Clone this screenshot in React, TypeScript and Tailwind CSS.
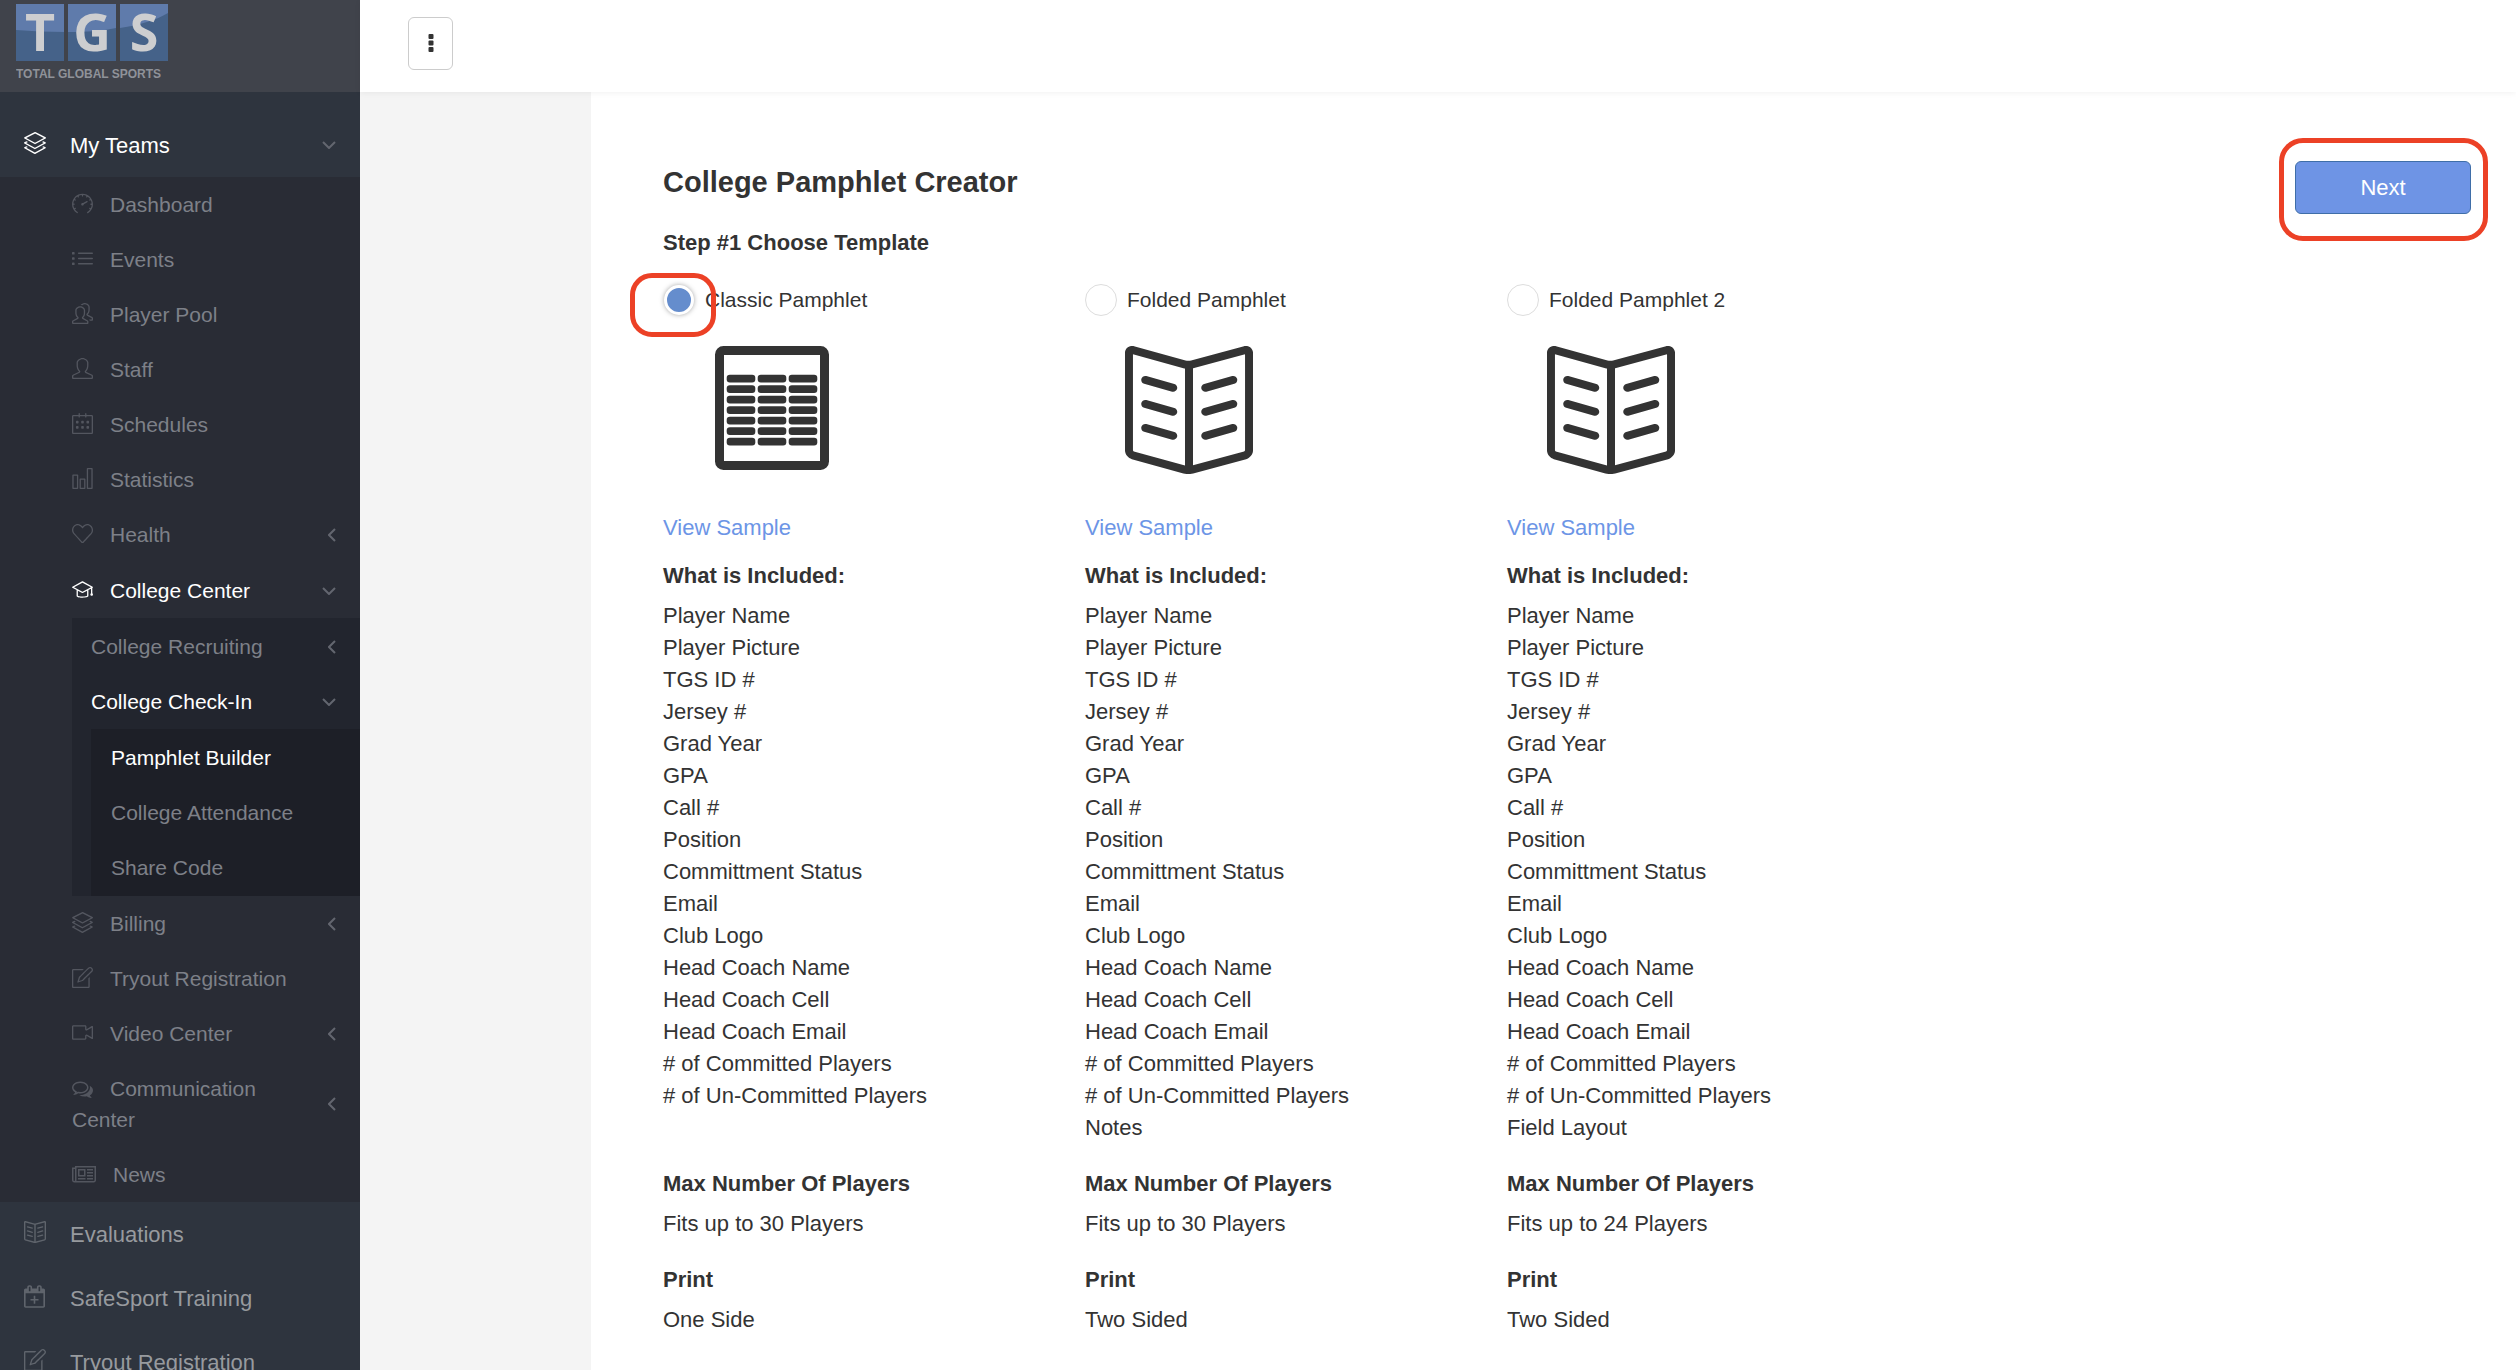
import { useState } from "react";
import type { ComponentType, ReactNode } from "react";
import {
  SlLayers,
  SlSpeedometer,
  SlList,
  SlPeople,
  SlUser,
  SlCalender,
  SlChart,
  SlHeart,
  SlGraduation,
  SlNote,
  SlCamrecorder,
  SlBookOpen,
} from "react-icons/sl";

type IconProps = { className?: string };
type Icon = ComponentType<IconProps>;

function CommentsIcon({ className }: IconProps) {
  return (
    <svg className={className} viewBox="0 128 1792 1536" width="21" height="18" fill="currentColor" aria-hidden="true">
      <path d="M704 384q-153 0-286 52t-211.5 141-78.5 191q0 82 53 158t149 132l97 56-35 84q34-20 62-39l44-31 53 10q78 14 153 14 153 0 286-52t211.5-141 78.5-191-78.5-191-211.5-141-286-52zm0-128q191 0 353.5 68.5t256.5 186.5 94 257-94 257-256.5 186.5-353.5 68.5q-86 0-176-16-124 88-278 128-36 9-86 16h-3q-11 0-20.5-8t-11.5-21q-1-3-1-6.5t.5-6.5 2-6l2.5-5 3.5-5.5 4-5 4.5-5 4-4.5q5-6 23-25t26-29.5 22.5-29 25-38.5 20.5-44q-124-72-195-177t-71-224q0-139 94-257t256.5-186.5 353.5-68.5zm822 1169q10 24 20.5 44t25 38.5 22.5 29 26 29.5 23 25q1 1 4 4.5t4.5 5 4 5 3.5 5.5l2.5 5 2 6 .5 6.5-1 6.5q-3 14-13 22t-22 7q-50-7-86-16-154-40-278-128-90 16-176 16-271 0-472-132 58 4 88 4 161 0 309-45t264-129q125-92 192-212t67-254q0-77-23-152 129 71 204 178t75 230q0 120-71 224.5t-195 176.5z" />
    </svg>
  );
}

function NewspaperIcon({ className }: IconProps) {
  return (
    <svg className={className} viewBox="0 128 2048 1536" width="24" height="18" fill="currentColor" aria-hidden="true">
      <path d="M1024 512h-384v384h384v-384zm128 640v128h-640v-128h640zm0-768v640h-640v-640h640zm640 768v128h-512v-128h512zm0-256v128h-512v-128h512zm0-256v128h-512v-128h512zm0-256v128h-512v-128h512zm-1536 960v-960h-128v960q0 26 19 45t45 19 45-19 19-45zm1664 0v-1088h-1536v1088q0 33-11 64h1483q26 0 45-19t19-45zm128-1216v1216q0 80-56 136t-136 56h-1664q-80 0-136-56t-56-136v-1088h256v-128h1792z" />
    </svg>
  );
}

function CalendarPlusIcon({ className }: IconProps) {
  return (
    <svg className={className} viewBox="128 0 1664 1792" width="21" height="23" fill="currentColor" aria-hidden="true">
      <path d="M1664 256q52 0 90 38t38 90v1280q0 52-38 90t-90 38h-1408q-52 0-90-38t-38-90v-1280q0-52 38-90t90-38h128v-96q0-66 47-113t113-47h64q66 0 113 47t47 113v96h384v-96q0-66 47-113t113-47h64q66 0 113 47t47 113v96h128zm-384-96v288q0 14 9 23t23 9h64q14 0 23-9t9-23v-288q0-14-9-23t-23-9h-64q-14 0-23 9t-9 23zm-768 0v288q0 14 9 23t23 9h64q14 0 23-9t9-23v-288q0-14-9-23t-23-9h-64q-14 0-23 9t-9 23zm1152 1504v-1024h-1408v1024h1408zm-640-576h224q14 0 23 9t9 23v64q0 14-9 23t-23 9h-224v224q0 14-9 23t-23 9h-64q-14 0-23-9t-9-23v-224h-224q-14 0-23-9t-9-23v-64q0-14 9-23t23-9h224v-224q0-14 9-23t23-9h64q14 0 23 9t9 23z" />
    </svg>
  );
}

function Chevron({ open }: { open: boolean }) {
  return (
    <span className="flex w-3 shrink-0 justify-end text-[#63666f]">
      {open ? (
        <svg viewBox="0 0 14 8" width="14" height="8" className="shrink-0" fill="none" stroke="currentColor" strokeWidth="2" aria-hidden="true">
          <path d="M1 1l6 6 6-6" />
        </svg>
      ) : (
        <svg viewBox="0 0 8 14" width="8" height="14" fill="none" stroke="currentColor" strokeWidth="2" aria-hidden="true">
          <path d="M7 1L1 7l6 6" />
        </svg>
      )}
    </span>
  );
}

type RowProps = {
  label: ReactNode;
  icon?: Icon;
  active?: boolean;
  chevron?: "open" | "closed";
  className?: string;
};

function SubRow({ label, icon: IconCmp, active, chevron, className = "pl-[72px]" }: RowProps) {
  const text = active ? "text-white" : "text-[#7d8088]";
  const glyph = active ? "text-white" : "text-[#53565f]";
  return (
    <a href="#" className={`flex items-center justify-between py-3 pr-6 text-[21px] leading-[31px] ${text} ${className}`}>
      <span className="min-w-0">
        {IconCmp && (
          <span className={`mr-[17px] inline-flex h-[21px] align-[-2px] ${glyph}`}>
            <IconCmp className="self-center" />
          </span>
        )}
        {label}
      </span>
      {chevron && <Chevron open={chevron === "open"} />}
    </a>
  );
}

function TopRow({ label, icon: IconCmp, active, chevron }: RowProps & { icon: Icon }) {
  return (
    <a href="#" className={`flex h-16 items-center pr-6 pl-6 text-[22px] ${active ? "text-white" : "text-[#979a9e]"}`}>
      <span className={`flex w-[46px] shrink-0 pb-1 ${active ? "text-white" : "text-[#5f646c]"}`}>
        <IconCmp />
      </span>
      <span className="flex-1 whitespace-nowrap">{label}</span>
      {chevron && <Chevron open={chevron === "open"} />}
    </a>
  );
}

function Logo() {
  return (
    <svg viewBox="0 0 156 90" width="156" height="90" role="img" aria-label="TGS Total Global Sports">
      {["T", "G", "S"].map((letter, i) => (
        <g key={letter}>
          <rect x={i * 52} y="4" width="48" height="57" fill="#5f7bab" />
          <path
            fill="#456289"
            d={["M0 30C16 31 32 32 48 32V61H0Z", "M52 32C70 32 86 31 100 28V61H52Z", "M104 28C124 25 140 20 152 13V61H104Z"][i]}
          />
          <text x={i * 52 + 24} y="51" textAnchor="middle" fontFamily="Open Sans, sans-serif" fontWeight="700" fontSize="52" fill="#cdced0">
            {letter}
          </text>
        </g>
      ))}
      <text x="0" y="78" fontFamily="Liberation Sans, sans-serif" fontWeight="700" fontSize="12" fill="#8f9299">
        TOTAL GLOBAL SPORTS
      </text>
    </svg>
  );
}

function Sidebar() {
  return (
    <aside className="w-[360px] shrink-0 bg-[#2e343e]">
      <a href="#" className="flex h-[92px] bg-[#40434b] pl-4">
        <Logo />
      </a>
      <nav>
        <div className="pt-[21px]">
          <TopRow label="My Teams" icon={SlLayers} active chevron="open" />
        </div>
        <div className="bg-[#292c35]">
          <SubRow label="Dashboard" icon={SlSpeedometer} />
          <SubRow label="Events" icon={SlList} />
          <SubRow label="Player Pool" icon={SlPeople} />
          <SubRow label="Staff" icon={SlUser} />
          <SubRow label="Schedules" icon={SlCalender} />
          <SubRow label="Statistics" icon={SlChart} />
          <SubRow label="Health" icon={SlHeart} chevron="closed" />
          <div className="pt-px">
            <SubRow label="College Center" icon={SlGraduation} active chevron="open" />
          </div>
          <div className="ml-[72px] bg-[#22252e] pt-px">
            <SubRow label="College Recruiting" chevron="closed" className="pl-[19px]" />
            <SubRow label="College Check-In" active chevron="open" className="pl-[19px]" />
            <div className="ml-[19px] bg-[#1d1f27] py-px">
              <SubRow label="Pamphlet Builder" active className="pl-5" />
              <SubRow label="College Attendance" className="pl-5" />
              <SubRow label="Share Code" className="pl-5" />
            </div>
          </div>
          <SubRow label="Billing" icon={SlLayers} chevron="closed" />
          <SubRow label="Tryout Registration" icon={SlNote} />
          <SubRow label="Video Center" icon={SlCamrecorder} chevron="closed" />
          <SubRow label="Communication Center" icon={CommentsIcon} chevron="closed" />
          <SubRow label="News" icon={NewspaperIcon} />
        </div>
        <TopRow label="Evaluations" icon={SlBookOpen} />
        <TopRow label="SafeSport Training" icon={CalendarPlusIcon} />
        <TopRow label="Tryout Registration" icon={SlNote} />
      </nav>
    </aside>
  );
}

function ClassicArt() {
  return (
    <svg viewBox="0 0 114 124" width="114" height="124" fill="#333" aria-hidden="true">
      <rect x="4.5" y="4.5" width="105" height="115" rx="4" fill="none" stroke="#333" strokeWidth="9" />
      {[0, 1, 2, 3, 4, 5, 6].map((row) =>
        [0, 1, 2].map((col) => (
          <rect key={`${row}-${col}`} x={11.7 + col * 31} y={28.8 + row * 10.5} width="28.6" height="7.6" rx="3.2" />
        )),
      )}
    </svg>
  );
}

const fields = [
  "Player Name",
  "Player Picture",
  "TGS ID #",
  "Jersey #",
  "Grad Year",
  "GPA",
  "Call #",
  "Position",
  "Committment Status",
  "Email",
  "Club Logo",
  "Head Coach Name",
  "Head Coach Cell",
  "Head Coach Email",
  "# of Committed Players",
  "# of Un-Committed Players",
];

const templates = [
  { id: "classic", name: "Classic Pamphlet", extra: "", max: "Fits up to 30 Players", print: "One Side" },
  { id: "folded", name: "Folded Pamphlet", extra: "Notes", max: "Fits up to 30 Players", print: "Two Sided" },
  { id: "folded2", name: "Folded Pamphlet 2", extra: "Field Layout", max: "Fits up to 24 Players", print: "Two Sided" },
];

export default function App() {
  const [selected, setSelected] = useState("classic");
  return (
    <div className="flex h-screen overflow-hidden bg-white font-['Liberation_Sans',Arial,sans-serif] text-[#333]">
      <Sidebar />
      <div className="flex min-w-0 flex-1 flex-col">
        <header className="z-10 flex h-[92px] shrink-0 items-start bg-white pt-[17px] pl-12 shadow-[0_1px_6px_rgba(0,0,0,0.06)]">
          <button type="button" aria-label="More options" className="flex h-[53px] w-[45px] items-center justify-center rounded-md border border-[#ccc] bg-white pb-0.5">
            <svg viewBox="0 0 6 18" width="6" height="18" fill="#333" aria-hidden="true">
              <rect x="0.5" y="0" width="5" height="5" rx="1" />
              <rect x="0.5" y="6.5" width="5" height="5" rx="1" />
              <rect x="0.5" y="13" width="5" height="5" rx="1" />
            </svg>
          </button>
        </header>
        <div className="flex min-h-0 flex-1 bg-[#f4f4f4] pl-[231px]">
          <main className="flex flex-1 items-start justify-between bg-white pl-[72px]">
            <div className="pt-[70px]">
              <h1 className="text-[29px] leading-10 font-bold">College Pamphlet Creator</h1>
              <h2 className="mt-[25px] text-[22px] leading-8 font-bold">Step #1 Choose Template</h2>
              <div className="mt-[25px] flex text-[22px] leading-8">
                {templates.map((t) => (
                  <section key={t.id} className="w-[422px]">
                    <label className="flex h-8 items-center gap-[10px] text-[21px]">
                      <span className="relative flex">
                        <input
                          type="radio"
                          name="template"
                          value={t.id}
                          checked={selected === t.id}
                          onChange={() => setSelected(t.id)}
                          className="size-8 appearance-none rounded-full border border-[#ddd] bg-white checked:m-px checked:size-[30px] checked:border-3 checked:border-white checked:bg-[#658dcd] checked:shadow-[0_0_5px_rgba(0,0,0,0.35)]"
                        />
                        {t.id === "classic" && (
                          <span className="pointer-events-none absolute -top-[11px] -left-[33px] h-16 w-[86px] rounded-[22px] border-5 border-[#ec4126]" />
                        )}
                      </span>
                      {t.name}
                    </label>
                    <div className="flex h-[176px] pt-[30px] pl-10">
                      {t.id === "classic" ? (
                        <div className="pl-3">
                          <ClassicArt />
                        </div>
                      ) : (
                        <SlBookOpen className="size-32" />
                      )}
                    </div>
                    <a href="#" className="mt-5 block text-[#6c95e6]">
                      View Sample
                    </a>
                    <h3 className="mt-4 font-bold">What is Included:</h3>
                    <ul className="mt-2 min-h-[544px]">
                      {fields.map((f) => (
                        <li key={f}>{f}</li>
                      ))}
                      {t.extra && <li>{t.extra}</li>}
                    </ul>
                    <h3 className="mt-6 font-bold">Max Number Of Players</h3>
                    <p className="mt-2">{t.max}</p>
                    <h3 className="mt-6 font-bold">Print</h3>
                    <p className="mt-2">{t.print}</p>
                  </section>
                ))}
              </div>
            </div>
            <div className="mt-[46px] mr-7 rounded-3xl border-5 border-[#ec4126] pt-[18px] pr-3 pb-[22px] pl-[11px]">
              <button type="button" className="block h-[53px] w-[176px] rounded-md border border-[#3f6ea8] bg-[#6e94e5] text-[22px] text-white">
                Next
              </button>
            </div>
          </main>
        </div>
      </div>
    </div>
  );
}
